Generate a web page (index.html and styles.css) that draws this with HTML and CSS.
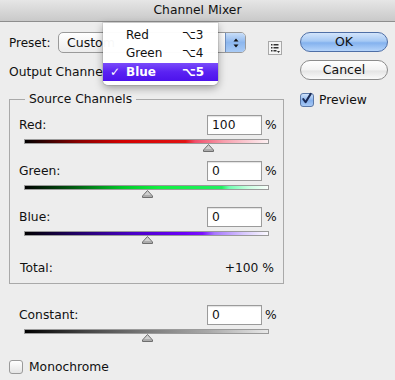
FILE: index.html
```html
<!DOCTYPE html>
<html>
<head>
<meta charset="utf-8">
<link rel="stylesheet" href="styles.css">
</head>
<body>
<div class="window">
  <div class="titlebar">Channel Mixer</div>
  <div class="content">
    <div class="left">
      <div class="preset-row">
        <span class="lbl-preset">Preset:</span>
        <div class="popup">
          <span class="popup-text">Custom</span>
          <span class="stepper">
            <svg width="8" height="12" viewBox="0 0 8 12"><path d="M4 1.5 L6.5 4.5 L1.5 4.5 Z M4 10.5 L6.5 7.5 L1.5 7.5 Z" fill="#111"/></svg>
          </span>
        </div>
        <span class="list-icon">
          <svg width="14" height="14" viewBox="0 0 14 14">
            <rect x="0.5" y="0.5" width="13" height="13" fill="#f5f5f5" stroke="#a8a8a8"/>
            <rect x="3" y="3" width="1.5" height="1.5" fill="#333"/>
            <rect x="5.5" y="3" width="5" height="1.5" fill="#333"/>
            <rect x="3" y="6" width="1.5" height="1.5" fill="#333"/>
            <rect x="5.5" y="6" width="5" height="1.5" fill="#333"/>
            <rect x="3" y="9" width="1.5" height="1.5" fill="#333"/>
            <rect x="5.5" y="9" width="3" height="1.5" fill="#333"/>
            <path d="M9 10 L12 10 L10.5 12 Z" fill="#333"/>
          </svg>
        </span>
      </div>
      <div class="output-row">Output Channel:</div>

      <fieldset class="group">
        <legend class="legend">Source Channels</legend>
        <div class="channel">
          <div class="field-row"><span class="flabel">Red:</span><span class="input">100</span><span class="pct">%</span></div>
          <div class="bar bar-red"></div>
          <div class="thumb-row"><svg class="thumb" style="margin-left:184px" width="11" height="8" viewBox="0 0 11 8"><path d="M5.5 0.5 L10.5 6 L10.5 7.5 L0.5 7.5 L0.5 6 Z" fill="#cfcfcf" stroke="#6e6e6e"/><path d="M1 6 L10 6" stroke="#8a8a8a"/></svg></div>
        </div>
        <div class="channel">
          <div class="field-row"><span class="flabel">Green:</span><span class="input">0</span><span class="pct">%</span></div>
          <div class="bar bar-green"></div>
          <div class="thumb-row"><svg class="thumb" style="margin-left:123px" width="11" height="8" viewBox="0 0 11 8"><path d="M5.5 0.5 L10.5 6 L10.5 7.5 L0.5 7.5 L0.5 6 Z" fill="#cfcfcf" stroke="#6e6e6e"/><path d="M1 6 L10 6" stroke="#8a8a8a"/></svg></div>
        </div>
        <div class="channel">
          <div class="field-row"><span class="flabel">Blue:</span><span class="input">0</span><span class="pct">%</span></div>
          <div class="bar bar-blue"></div>
          <div class="thumb-row"><svg class="thumb" style="margin-left:123px" width="11" height="8" viewBox="0 0 11 8"><path d="M5.5 0.5 L10.5 6 L10.5 7.5 L0.5 7.5 L0.5 6 Z" fill="#cfcfcf" stroke="#6e6e6e"/><path d="M1 6 L10 6" stroke="#8a8a8a"/></svg></div>
        </div>
        <div class="total-row"><span>Total:</span><span>+100 %</span></div>
      </fieldset>

      <div class="constant">
        <div class="field-row"><span class="flabel">Constant:</span><span class="input">0</span><span class="pct">%</span></div>
        <div class="bar bar-const"></div>
        <div class="thumb-row"><svg class="thumb" style="margin-left:123px" width="11" height="8" viewBox="0 0 11 8"><path d="M5.5 0.5 L10.5 6 L10.5 7.5 L0.5 7.5 L0.5 6 Z" fill="#cfcfcf" stroke="#6e6e6e"/><path d="M1 6 L10 6" stroke="#8a8a8a"/></svg></div>
      </div>

      <div class="mono-row"><span class="checkbox"></span><span>Monochrome</span></div>
    </div>

    <div class="right">
      <div class="btn btn-ok">OK</div>
      <div class="btn btn-cancel">Cancel</div>
      <div class="preview-row">
        <span class="checkbox checked">
          <svg width="14" height="14" viewBox="0 0 14 14"><path d="M3.5 7 L6 10.5 L11.5 1.5" fill="none" stroke="#1a2a55" stroke-width="2.2" stroke-linecap="round" stroke-linejoin="round"/></svg>
        </span>
        <span>Preview</span>
      </div>
    </div>
  </div>

  <div class="menu">
    <div class="mitem"><span class="mcheck"></span><span class="mtext">Red</span><span class="mkey">⌥3</span></div>
    <div class="mitem"><span class="mcheck"></span><span class="mtext">Green</span><span class="mkey">⌥4</span></div>
    <div class="mitem active"><span class="mcheck">✓</span><span class="mtext">Blue</span><span class="mkey">⌥5</span></div>
  </div>
</div>
</body>
</html>
```

FILE: styles.css
```css
* { box-sizing: border-box; }
html, body {
  margin: 0;
  padding: 0;
  background: #ededed;
}
body {
  font-family: "DejaVu Sans", sans-serif;
  font-size: 12px;
  color: #111;
}
.window {
  position: relative;
  width: 395px;
  height: 380px;
  overflow: hidden;
  background: #ededed;
}
.titlebar {
  height: 22px;
  line-height: 21px;
  text-align: center;
  font-size: 12.3px;
  color: #111;
  background: linear-gradient(#e6e6e6, #c9c9c9);
  border-bottom: 1px solid #8e8e8e;
}
.content {
  display: flex;
  padding: 10px 0 0 9px;
}
.left {
  width: 275px;
  display: flex;
  flex-direction: column;
}
.right {
  margin-left: 16px;
  width: 88px;
  display: flex;
  flex-direction: column;
}
.preset-row {
  display: flex;
  align-items: center;
  height: 21px;
}
.lbl-preset {
  width: 49px;
}
.popup {
  width: 188px;
  height: 21px;
  border: 1px solid #9a9a9a;
  border-radius: 5px;
  background: linear-gradient(#ffffff, #ececec);
  display: flex;
  align-items: center;
  overflow: hidden;
}
.popup-text {
  flex: 1;
  padding-left: 8px;
  font-size: 12.5px;
}
.stepper {
  width: 20px;
  height: 100%;
  background: linear-gradient(#c9def8, #8db7ee 50%, #a9cbf6);
  border-left: 1px solid #6f8fc0;
  display: flex;
  align-items: center;
  justify-content: center;
}
.list-icon {
  margin-left: 22px;
  margin-top: 10px;
  width: 14px;
  height: 14px;
  display: flex;
}
.output-row {
  margin-top: 9px;
  height: 20px;
  line-height: 20px;
  font-size: 12.3px;
}
.group {
  margin: 10px 0 0 0;
  padding: 0 8px 7px 9px;
  border: 1px solid #a9a9a9;
  min-width: 0;
}
.legend {
  margin-left: 6px;
  padding: 0 4px;
  font-size: 12.3px;
  line-height: 15px;
}
.channel {
  margin-top: 8px;
}
.channel + .channel {
  margin-top: 9px;
}
.field-row {
  display: flex;
  align-items: center;
  height: 20px;
}
.flabel {
  flex: 1;
  font-size: 12.3px;
}
.input {
  width: 55px;
  height: 20px;
  border: 1px solid #9b9b9b;
  box-shadow: inset 0 1px 1px rgba(0,0,0,0.12);
  background: #fff;
  padding-left: 4px;
  line-height: 18px;
  font-size: 12.3px;
}
.pct {
  width: 13px;
  padding-left: 3px;
  font-size: 12.3px;
}
.bar {
  margin-top: 4px;
  margin-left: 5px;
  width: 245px;
  height: 5px;
  border: 1px solid #9a9a9a;
}
.bar-red {
  background: linear-gradient(to right, #000 0%, #8a0000 22%, #d20000 40%, #e21414 66%, #f04e6a 70%, #f7a0ae 82%, #fdf0f2 100%);
}
.bar-green {
  background: linear-gradient(to right, #000 0%, #005a10 20%, #00c828 40%, #10f040 55%, #20f060 81%, #70ffb0 84%, #c8ffe0 92%, #fbfffc 100%);
}
.bar-blue {
  background: linear-gradient(to right, #000 0%, #1e0060 20%, #4a00c8 45%, #6a00f8 65%, #7a10ff 73%, #a878ff 78%, #d8c8ff 90%, #fbfaff 100%);
}
.bar-const {
  background: linear-gradient(to right, #000 0%, #444 25%, #7a7a7a 50%, #a8a8a8 75%, #e8e8e8 100%);
}
.thumb-row {
  height: 8px;
  display: flex;
}
.thumb {
  display: block;
}
.total-row {
  margin-top: 16px;
  display: flex;
  justify-content: space-between;
  height: 16px;
  line-height: 16px;
  padding-left: 1px;
  padding-right: 1px;
  font-size: 12.3px;
}
.constant {
  margin-top: 21px;
  padding-left: 10px;
  padding-right: 9px;
}
.mono-row {
  margin-top: 18px;
  display: flex;
  align-items: center;
  gap: 6px;
  font-size: 12.3px;
}
.checkbox {
  width: 14px;
  height: 14px;
  border: 1px solid #9a9a9a;
  border-radius: 3px;
  background: linear-gradient(#ffffff, #e4e4e4);
  display: flex;
}
.checkbox.checked {
  background: linear-gradient(#cfe2fa, #86b1ec 55%, #a8c9f5);
  border-color: #5a78a8;
  overflow: visible;
}
.checkbox.checked svg {
  margin-top: -2px;
  margin-left: -1px;
}
.btn {
  height: 20px;
  border-radius: 10px;
  text-align: center;
  line-height: 18px;
  font-size: 12.5px;
}
.btn-ok {
  border: 1px solid #4f6fa6;
  background: linear-gradient(#d3e5fb, #a6c9f4 45%, #84b2ee 55%, #b5d4fa);
}
.btn-cancel {
  margin-top: 8px;
  border: 1px solid #8c8c8c;
  background: linear-gradient(#ffffff, #f2f2f2 50%, #e4e4e4 55%, #fafafa);
}
.preview-row {
  margin-top: 13px;
  display: flex;
  align-items: center;
  gap: 5px;
  font-size: 12.3px;
}
.menu {
  position: absolute;
  left: 103px;
  top: 23px;
  width: 115px;
  padding: 3px 0 4px;
  background: rgba(255,255,255,0.97);
  border-radius: 0 0 5px 5px;
  box-shadow: 0 3px 8px rgba(0,0,0,0.35), 0 0 0 1px rgba(0,0,0,0.08);
}
.mitem {
  display: flex;
  align-items: center;
  height: 18px;
  font-size: 12px;
  color: #111;
}
.mitem + .mitem.active {
  margin-top: 1px;
}
.mcheck {
  width: 23px;
  padding-left: 7px;
  font-weight: bold;
}
.mtext {
  flex: 1;
}
.mkey {
  width: 36px;
}
.mitem.active {
  background: linear-gradient(#7a4bfb, #5a22f2 50%, #4d12ec);
  color: #fff;
  font-weight: bold;
}
```
